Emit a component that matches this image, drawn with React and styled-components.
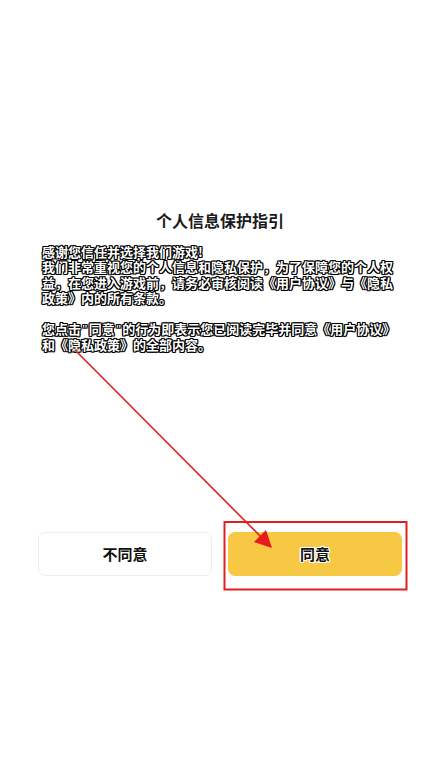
import React from "react";
import styled, { createGlobalStyle } from "styled-components";

const Global = createGlobalStyle`
  html, body { margin: 0; padding: 0; background: #ffffff; }
  body { font-family: "Noto Sans CJK SC", "Noto Sans", sans-serif; }
  * { box-sizing: border-box; }
`;

const Page = styled.div`
  position: relative;
  width: 440px;
  height: 783px;
  background: #ffffff;
  display: flex;
  flex-direction: column;
  padding-top: 208px;
`;

const Title = styled.h1`
  margin: 0;
  text-align: center;
  font-size: 16px;
  line-height: 24px;
  font-weight: 600;
  color: #1a1a1a;
`;

const Body = styled.div`
  margin: 12px 0 0;
  padding: 0 42px;
  font-size: 13px;
  line-height: 15.4px;
  font-weight: 700;
  color: #ffffff;
  text-shadow:
    -1px -1px 0 #000, 0 -1px 0 #000, 1px -1px 0 #000,
    -1px 0 0 #000, 1px 0 0 #000,
    -1px 1px 0 #000, 0 1px 0 #000, 1px 1px 0 #000,
    0 0 1.5px #000;
`;

const Para = styled.p`
  margin: ${(p) => (p.$spaced ? "15.4px" : "0")} 0 0;
`;

const Quote = styled.span`
  font-family: "Liberation Sans", sans-serif;
  font-weight: 400;
  padding: 0 1.5px;
`;

const ButtonRow = styled.div`
  margin-top: 179px;
  padding: 0 38px;
  display: grid;
  grid-template-columns: 1fr 1fr;
  gap: 16px;
`;

const Button = styled.button`
  height: 44px;
  border-radius: 7px;
  font-family: inherit;
  font-size: 15px;
  font-weight: 700;
  color: #111;
  cursor: pointer;
  border: 1px solid ${(p) => (p.$primary ? "#f6c843" : "#eeeeee")};
  background: ${(p) => (p.$primary ? "#f6c843" : "#ffffff")};
  text-shadow: ${(p) =>
    p.$primary
      ? "-1px -1px 0 #fff, 1px -1px 0 #fff, -1px 1px 0 #fff, 1px 1px 0 #fff, 0 1px 0 #fff, 0 -1px 0 #fff, 1px 0 0 #fff, -1px 0 0 #fff"
      : "none"};
`;

const Overlay = styled.svg`
  position: absolute;
  left: 0;
  top: 0;
  width: 440px;
  height: 783px;
  pointer-events: none;
`;

export default function App() {
  return (
    <>
      <Global />
      <Page>
        <Title>个人信息保护指引</Title>
        <Body>
          <Para>
            感谢您信任并选择我们游戏!
            <br />
            我们非常重视您的个人信息和隐私保护，为了保障您的个人权益，在您进入游戏前，请务必审核阅读《用户协议》与《隐私政策》内的所有条款。
          </Para>
          <Para $spaced>
            您点击<Quote>"</Quote>同意<Quote>"</Quote>的行为即表示您已阅读完毕并同意《用户协议》和《隐私政策》的全部内容。
          </Para>
        </Body>
        <ButtonRow>
          <Button>不同意</Button>
          <Button $primary>同意</Button>
        </ButtonRow>
        <Overlay viewBox="0 0 440 783">
          <rect x="224.5" y="522" width="182" height="67.5" fill="none" stroke="#e02020" strokeWidth="2" />
          <line x1="75" y1="350" x2="262" y2="538" stroke="#e02020" strokeWidth="1.6" />
          <polygon points="272,548 266,530 254,542" fill="#e8191b" />
        </Overlay>
      </Page>
    </>
  );
}
